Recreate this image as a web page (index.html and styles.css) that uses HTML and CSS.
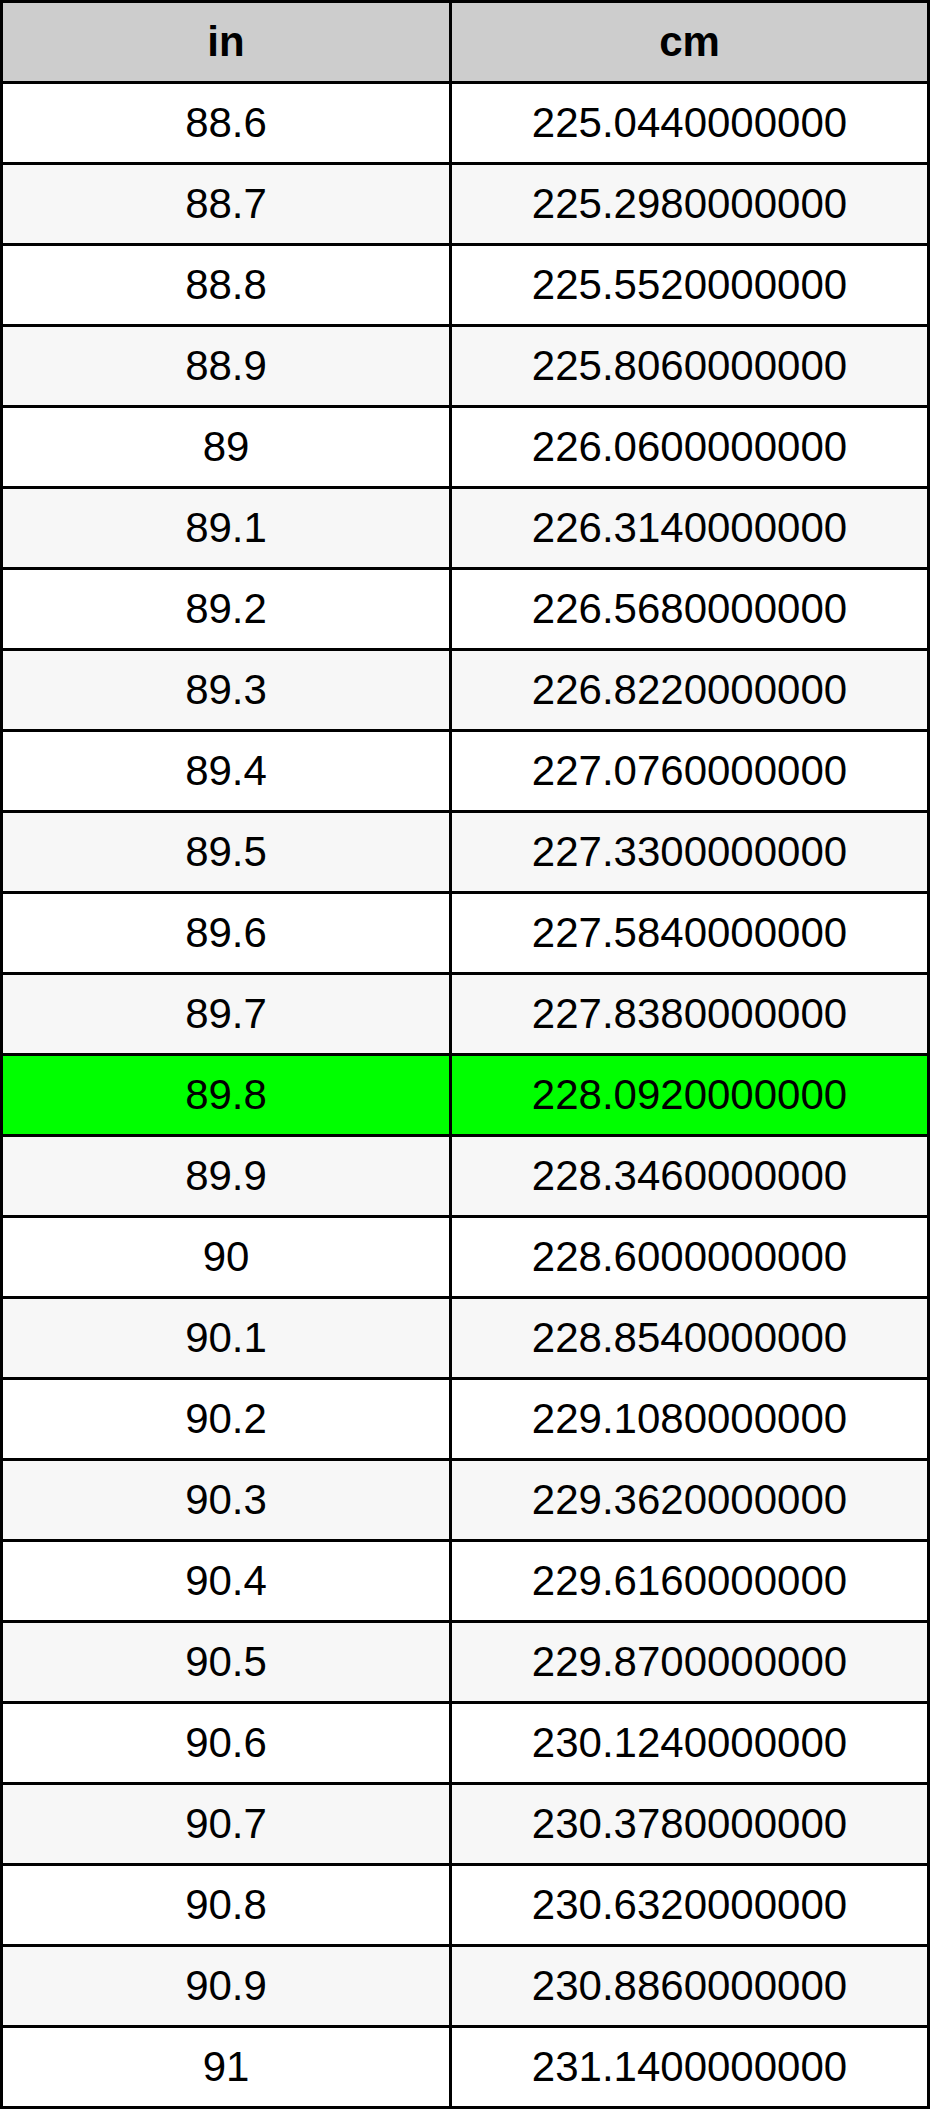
FILE: index.html
```html
<!DOCTYPE html>
<html>
<head>
<meta charset="utf-8">
<link rel="stylesheet" href="styles.css">
</head>
<body>
<table class="conv">
<colgroup><col class="c-in"><col class="c-cm"></colgroup>
<thead>
<tr><th>in</th><th>cm</th></tr>
</thead>
<tbody>
<tr><td>88.6</td><td>225.0440000000</td></tr>
<tr class="alt"><td>88.7</td><td>225.2980000000</td></tr>
<tr><td>88.8</td><td>225.5520000000</td></tr>
<tr class="alt"><td>88.9</td><td>225.8060000000</td></tr>
<tr><td>89</td><td>226.0600000000</td></tr>
<tr class="alt"><td>89.1</td><td>226.3140000000</td></tr>
<tr><td>89.2</td><td>226.5680000000</td></tr>
<tr class="alt"><td>89.3</td><td>226.8220000000</td></tr>
<tr><td>89.4</td><td>227.0760000000</td></tr>
<tr class="alt"><td>89.5</td><td>227.3300000000</td></tr>
<tr><td>89.6</td><td>227.5840000000</td></tr>
<tr class="alt"><td>89.7</td><td>227.8380000000</td></tr>
<tr class="hl"><td>89.8</td><td>228.0920000000</td></tr>
<tr class="alt"><td>89.9</td><td>228.3460000000</td></tr>
<tr><td>90</td><td>228.6000000000</td></tr>
<tr class="alt"><td>90.1</td><td>228.8540000000</td></tr>
<tr><td>90.2</td><td>229.1080000000</td></tr>
<tr class="alt"><td>90.3</td><td>229.3620000000</td></tr>
<tr><td>90.4</td><td>229.6160000000</td></tr>
<tr class="alt"><td>90.5</td><td>229.8700000000</td></tr>
<tr><td>90.6</td><td>230.1240000000</td></tr>
<tr class="alt"><td>90.7</td><td>230.3780000000</td></tr>
<tr><td>90.8</td><td>230.6320000000</td></tr>
<tr class="alt"><td>90.9</td><td>230.8860000000</td></tr>
<tr><td>91</td><td>231.1400000000</td></tr>
</tbody>
</table>
</body>
</html>
```
FILE: styles.css
```css
html, body {
  margin: 0;
  padding: 0;
  background: #ffffff;
}
.conv {
  width: 930px;
  table-layout: fixed;
  border-collapse: separate;
  border-spacing: 3px;
  background: #000000;
  font-family: "Liberation Sans", Arial, Helvetica, sans-serif;
  font-size: 42px;
  color: #000000;
}
.c-in { width: 446px; }
.c-cm { width: 475px; }
.conv th,
.conv td {
  height: 78px;
  padding: 0;
  text-align: center;
  vertical-align: middle;
  background: #ffffff;
  line-height: 1;
}
.conv th {
  background: #cdcdcd;
  font-weight: bold;
}
.conv tr.alt td {
  background: #f7f7f7;
}
.conv tr.hl td {
  background: #00ff00;
}
```
